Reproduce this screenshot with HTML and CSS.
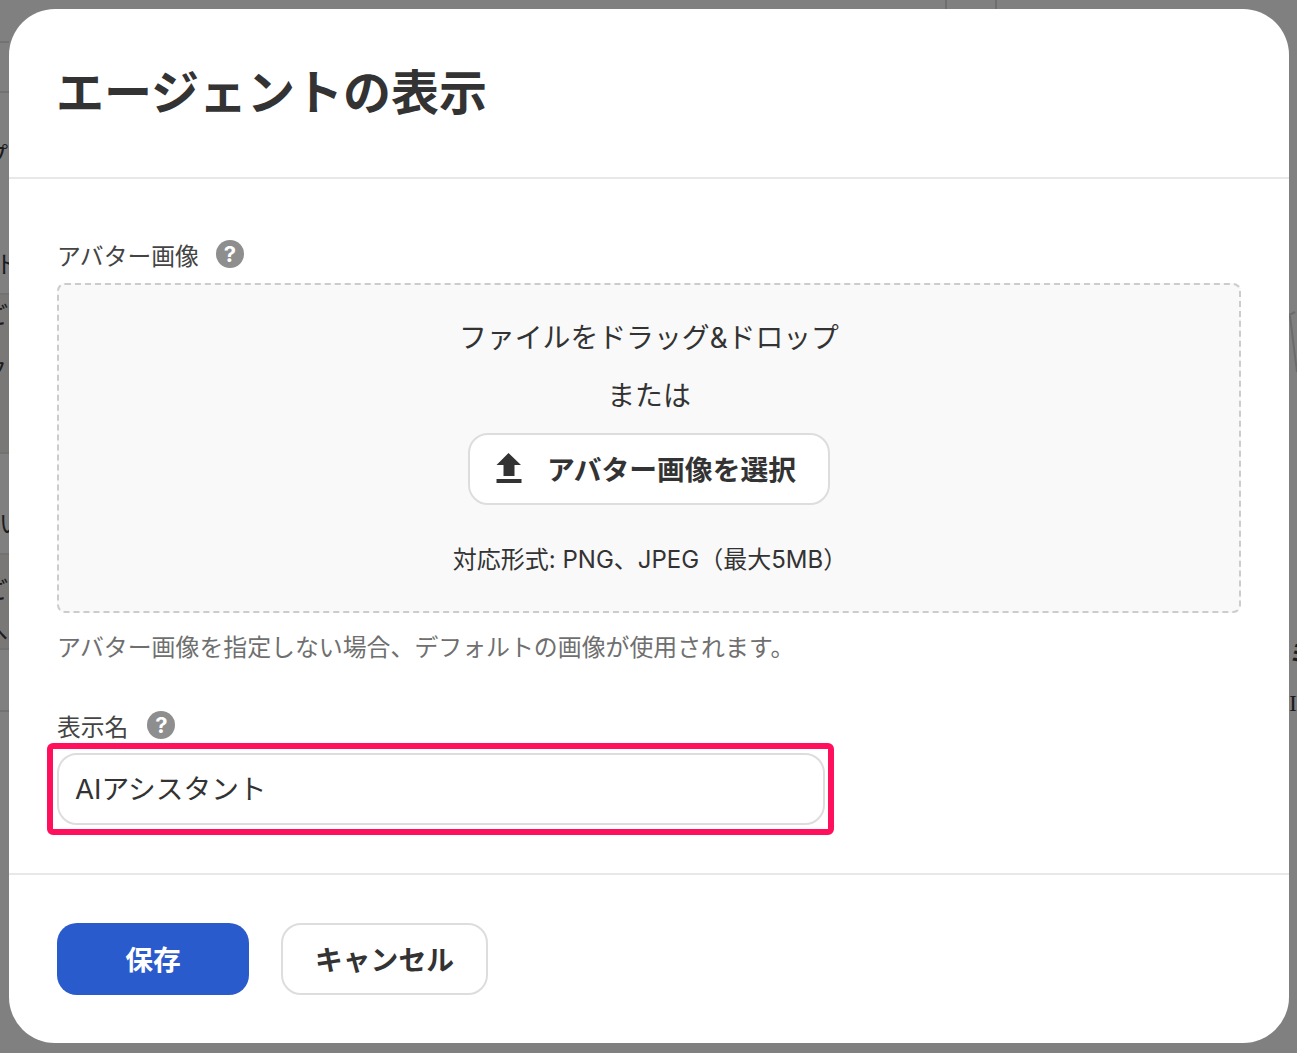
FILE: index.html
```html
<!DOCTYPE html>
<html lang="ja">
<head>
<meta charset="utf-8">
<title>エージェントの表示</title>
<link rel="stylesheet" href="styles.css">
</head>
<body>
<div class="page">
  <div class="bg-top"><i></i><i></i></div>
  <div class="bg-left">
    <div class="bg-row h42"></div>
    <div class="bg-row h50"></div>
    <div class="bg-row h202"><span class="g1">プ</span><span class="g2">ト</span></div>
    <div class="bg-row h159 shade"><span class="g3">ご</span><span class="g4">ク</span></div>
    <div class="bg-row h101"><span class="g5">い</span></div>
    <div class="bg-row h95 shade"><span class="g6">ご</span><span class="g7">へ</span></div>
    <div class="bg-row h62"></div>
  </div>
  <div class="bg-right">
    <svg class="bg-shape" width="8" height="70" viewBox="0 0 8 70"><path d="M0 5 L6 2 M1 6 L8 62" fill="none" stroke="#6b6b6b" stroke-width="2"/></svg>
    <span class="g8">ミ</span>
    <span class="g9">I</span>
  </div>
  <div class="modal">
    <header class="modal-head"><h1>エージェントの表示</h1></header>
    <main class="modal-body">
      <div class="label-row"><span>アバター画像</span><span class="help">?</span></div>
      <section class="drop">
        <p class="drop-title">ファイルをドラッグ&amp;ドロップ</p>
        <p class="drop-or">または</p>
        <button class="btn upload" type="button">
          <svg width="26" height="30" viewBox="0 0 26 30"><path d="M12.500 0 L25 12 H18.500 V23 H7.500 V12 H0.500 Z M0.500 26 H25.500 V30 H0.500 Z" fill="#333"/></svg>
          <span>アバター画像を選択</span>
        </button>
        <p class="drop-note">対応形式: PNG、JPEG（最大5MB）</p>
      </section>
      <p class="hint">アバター画像を指定しない場合、デフォルトの画像が使用されます。</p>
      <div class="label-row second"><span>表示名</span><span class="help">?</span></div>
      <div class="field">
        <input class="name-input" type="text" value="AIアシスタント">
        <div class="highlight"></div>
      </div>
    </main>
    <footer class="modal-foot">
      <button class="btn save" type="button">保存</button>
      <button class="btn cancel" type="button">キャンセル</button>
    </footer>
  </div>
</div>
</body>
</html>
```

FILE: styles.css
```css
* { box-sizing: border-box; }
html, body { margin: 0; padding: 0; }
body {
  font-family: Inter, "Noto Sans CJK JP", sans-serif;
  color: #333;
  background: #808080;
}
.page {
  position: relative;
  width: 1297px;
  height: 1053px;
  overflow: hidden;
  background: #808080;
}
.bg-top { position: absolute; top: 0; left: 945px; display: flex; gap: 48px; }
.bg-top i { display: block; width: 2px; height: 9px; background: #6e6e6e; }
.bg-left { width: 9px; overflow: hidden; display: flex; flex-direction: column; color: #1c1c1c; }
.bg-row { position: relative; border-bottom: 2px solid #727272; font-size: 24px; line-height: 30px; }
.bg-row span { position: absolute; white-space: nowrap; }
.h42 { height: 43px; }
.h50 { height: 50px; }
.h202 { height: 202px; }
.h159 { height: 159px; }
.h101 { height: 101px; }
.h95 { height: 95px; }
.h62 { height: 62px; }
.shade { background: #7a7877; }
.g1 { left: -16px; top: 48px; }
.g2 { left: -5px; top: 157px; }
.g3 { left: -16px; top: 6px; }
.g4 { left: -17px; top: 60px; }
.g5 { left: -1px; top: 55px; }
.g6 { left: -16px; top: 21px; }
.g7 { left: -16px; top: 62px; }
.bg-right { position: absolute; left: 1289px; top: 0; width: 8px; height: 1053px; overflow: hidden; color: #1c1c1c; }
.bg-shape { position: absolute; left: 0; top: 310px; }
.g8 { position: absolute; left: 0; top: 640px; font-size: 24px; line-height: 30px; font-weight: 700; }
.g9 { position: absolute; left: 0; top: 688px; font-size: 24px; line-height: 30px; font-family: "Liberation Serif", serif; }

.modal {
  position: absolute;
  left: 9px;
  top: 9px;
  width: 1280px;
  height: 1034px;
  background: #fff;
  border-radius: 46px;
  display: flex;
  flex-direction: column;
}
.modal-head {
  height: 170px;
  padding: 48px 47px 0;
  border-bottom: 2px solid #e8e8e8;
}
.modal-head h1 { margin: 0; font-size: 48px; line-height: 72px; font-weight: 700; color: #333; }
.modal-body { flex: 1; padding: 60px 48px 0; }
.label-row { display: flex; align-items: center; gap: 17px; height: 36px; font-size: 23.8px; line-height: 36px; color: #444; }
.second { margin-top: 44px; gap: 19px; }
.help {
  width: 28px;
  height: 28px;
  margin-top: -6px;
  border-radius: 50%;
  background: #8e8e8e;
  color: #fff;
  font-size: 22px;
  line-height: 28px;
  font-weight: 700;
  text-align: center;
}
.drop {
  margin-top: 8px;
  height: 330px;
  border: 2px dashed #ccc;
  border-radius: 8px;
  background: #f9f9f9;
  display: flex;
  flex-direction: column;
  align-items: center;
  padding-top: 32px;
}
.drop-title, .drop-or { margin: 0; font-size: 27.85px; line-height: 42px; color: #333; }
.drop-or { margin-top: 16px; }
.btn {
  font-family: inherit;
  font-weight: 700;
  font-size: 27.8px;
  height: 72px;
  border-radius: 20px;
  border: 2px solid #ddd;
  background: #fff;
  color: #333;
  padding: 0 0 3px;
}
.upload { margin-top: 16px; width: 362px; display: flex; align-items: center; justify-content: flex-start; gap: 25px; padding-left: 26px; }
.upload svg { flex: none; }
.drop-note { margin: 37px 0 0; font-size: 24px; line-height: 36px; color: #333; padding-left: 2px; }
.hint { margin: 17px 0 0; font-size: 23.9px; line-height: 36px; color: #6f6f6f; }
.field { position: relative; width: 768px; margin-top: 7px; }
.name-input {
  display: block;
  width: 100%;
  height: 72px;
  border: 2px solid #ddd;
  border-radius: 20px;
  background: #fff;
  padding: 0 16px 4px;
  font-family: inherit;
  font-size: 27.7px;
  color: #333;
}
.highlight {
  position: absolute;
  left: -10px;
  top: -10px;
  right: -9px;
  bottom: -10px;
  border: 6px solid #ff0f5c;
  border-radius: 6px;
}
.modal-foot {
  height: 170px;
  border-top: 2px solid #e8e8e8;
  padding: 48px 48px 0;
  display: flex;
  align-items: flex-start;
  gap: 32px;
}
.save { width: 192px; background: #2a5bcc; border: 0; color: #fff; }
.cancel { width: 207px; }
```
